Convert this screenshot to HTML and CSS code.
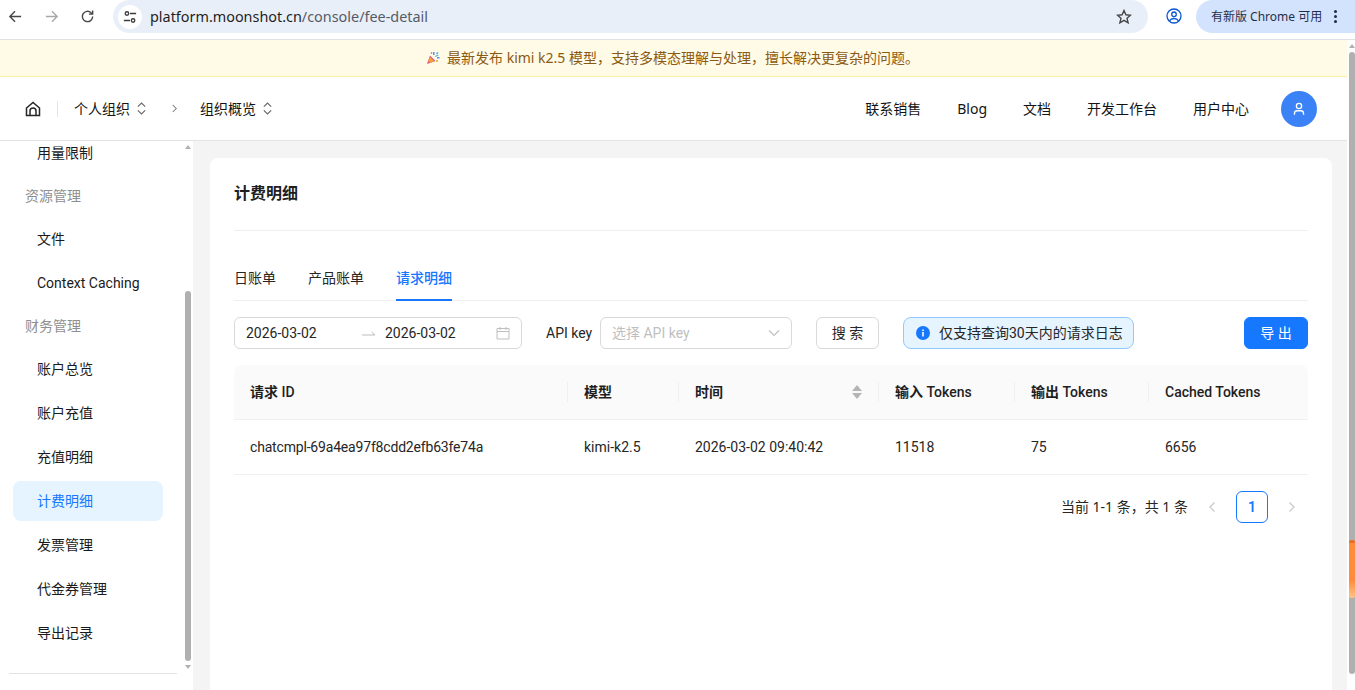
FILE: index.html
```html
<!DOCTYPE html>
<html lang="zh-CN">
<head>
<meta charset="utf-8">
<title>计费明细</title>
<link rel="stylesheet" href="styles.css">
</head>
<body>
<div class="browser-bar">
  <svg class="nav-icon back" viewBox="0 0 16 16"><path d="M14 8H2.500M7.500 2.500 2 8l5.500 5.500"/></svg>
  <svg class="nav-icon fwd" viewBox="0 0 16 16"><path d="M2 8h11.500M8.500 2.500 14 8l-5.500 5.500"/></svg>
  <svg class="nav-icon reload" viewBox="0 0 16 16"><path d="M13.500 8a5.500 5.500 0 1 1-1.700-4L13.500 5.500M13.500 1.500v4h-4"/></svg>
  <div class="omnibox">
    <span class="site-info"><svg viewBox="0 0 16 16"><circle cx="4.500" cy="4" r="2"/><circle cx="11.500" cy="12" r="2"/><path d="M8 4h7M1 12h7"/></svg></span>
    <span class="url"><b>platform.moonshot.cn</b>/console/fee-detail</span>
    <svg class="star" viewBox="0 0 16 16"><path d="m8 1.500 1.900 4.300 4.600.4-3.500 3 1.100 4.600L8 11.400l-4.100 2.400L5 9.200l-3.500-3 4.600-.4z"/></svg>
  </div>
  <svg class="profile" viewBox="0 0 16 16"><circle cx="8" cy="8" r="7"/><circle cx="8" cy="6.300" r="2.300"/><path d="M3.500 12.800c1-1.700 2.600-2.300 4.500-2.300s3.500.6 4.500 2.300"/></svg>
  <div class="update-pill"><span>有新版 Chrome 可用</span><i class="dots"></i></div>
</div>

<div class="viewport">
  <div class="page">
    <div class="banner">
      <svg class="popper" viewBox="0 0 14 14"><path fill="#e0528a" d="M1 13 4 4.500 9.500 10z"/><path fill="#f2a33a" d="m2 10 2-4 4 4-3 2z"/><path fill="#5b8def" d="M7 1h1.500v3H7zM11 6h2.500v1.500H11z"/><path fill="#42b3d5" d="m10 2 2-1 .6 1.200-2 1zM9 5l3-1.500.5 1-3 1.500z"/><circle cx="11" cy="10" r="1" fill="#f2a33a"/><circle cx="5.500" cy="2" r=".8" fill="#9b59b6"/></svg>
      <span>最新发布 kimi k2.5 模型，支持多模态理解与处理，擅长解决更复杂的问题。</span>
    </div>
    <header class="topnav">
      <svg class="home" viewBox="0 0 16 16"><path d="M1.500 7 8 1.500 14.500 7v7.500h-13z"/><path d="M5 14.500V10a3 3 0 0 1 6 0v4.500"/></svg>
      <span class="nav-sep"></span>
      <span class="crumb">个人组织</span>
      <svg class="updown" viewBox="0 0 12 14"><path d="m2 5 4-4 4 4M2 9l4 4 4-4"/></svg>
      <svg class="crumb-arrow" viewBox="0 0 8 12"><path d="m2 2 4 4-4 4"/></svg>
      <span class="crumb">组织概览</span>
      <svg class="updown" viewBox="0 0 12 14"><path d="m2 5 4-4 4 4M2 9l4 4 4-4"/></svg>
      <nav class="links">
        <a>联系销售</a><a>Blog</a><a>文档</a><a>开发工作台</a><a>用户中心</a>
      </nav>
      <span class="avatar"><svg viewBox="0 0 16 16"><circle cx="8" cy="4.500" r="3"/><path d="M2.800 14.500v-1.300c0-2 1.500-3.200 3.200-3.200h4c1.700 0 3.200 1.200 3.200 3.200v1.300"/></svg></span>
    </header>
    <div class="body-row">
      <aside class="sidebar">
        <div class="side-col">
          <ul class="menu">
            <li class="item">用量限制</li>
            <li class="group">资源管理</li>
            <li class="item">文件</li>
            <li class="item">Context Caching</li>
            <li class="group">财务管理</li>
            <li class="item">账户总览</li>
            <li class="item">账户充值</li>
            <li class="item">充值明细</li>
            <li class="item active">计费明细</li>
            <li class="item">发票管理</li>
            <li class="item">代金券管理</li>
            <li class="item">导出记录</li>
          </ul>
          <div class="side-rule"></div>
        </div>
        <div class="side-scroll">
          <i class="arrow-up"></i>
          <i class="side-thumb"></i>
          <i class="arrow-down"></i>
        </div>
      </aside>
      <main class="main">
        <section class="card">
          <h1 class="title">计费明细</h1>
          <div class="tabs">
            <a class="tab">日账单</a>
            <a class="tab">产品账单</a>
            <a class="tab on">请求明细</a>
          </div>
          <div class="filters">
            <div class="range">
              <span class="date">2026-03-02</span>
              <svg class="range-arrow" viewBox="0 0 14 8"><path d="M0 5h13L9.500 2"/></svg>
              <span class="date">2026-03-02</span>
              <svg class="calendar" viewBox="0 0 14 14"><path d="M1 2.500h12v10.500H1zM1 5.500h12M4 1v3M10 1v3"/></svg>
            </div>
            <label class="api-label">API key</label>
            <div class="select"><span>选择 API key</span><svg viewBox="0 0 12 8"><path d="m1 1.500 5 5 5-5"/></svg></div>
            <button class="btn">搜 索</button>
            <div class="notice">
              <svg viewBox="0 0 14 14"><circle cx="7" cy="7" r="7" fill="#1677ff"/><path fill="#fff" d="M6.200 6h1.600v4.500H6.200zM6.200 3.400h1.600V5H6.200z"/></svg>
              <span>仅支持查询30天内的请求日志</span>
            </div>
            <button class="btn primary">导 出</button>
          </div>
          <table class="grid">
            <colgroup>
              <col class="c1"><col class="c2"><col class="c3"><col class="c4"><col class="c5"><col class="c6">
            </colgroup>
            <thead>
              <tr>
                <th><b>请求</b> ID</th>
                <th><b>模型</b></th>
                <th><b>时间</b><span class="sorter"><i class="s-up"></i><i class="s-down"></i></span></th>
                <th><b>输入</b> Tokens</th>
                <th><b>输出</b> Tokens</th>
                <th>Cached Tokens</th>
              </tr>
            </thead>
            <tbody>
              <tr>
                <td class="req-id">chatcmpl-69a4ea97f8cdd2efb63fe74a</td>
                <td>kimi-k2.5</td>
                <td>2026-03-02 09:40:42</td>
                <td>11518</td>
                <td>75</td>
                <td>6656</td>
              </tr>
            </tbody>
          </table>
          <div class="pager">
            <span class="total">当前 1-1 条，共 1 条</span>
            <span class="pg"><svg viewBox="0 0 8 12"><path d="M6.500 1.500 2 6l4.500 4.500"/></svg></span>
            <span class="pg current">1</span>
            <span class="pg"><svg viewBox="0 0 8 12"><path d="M1.500 1.500 6 6l-4.500 4.500"/></svg></span>
          </div>
        </section>
      </main>
    </div>
  </div>
  <div class="page-scroll">
    <i class="arrow-up"></i>
    <i class="page-thumb"></i>
    <i class="orange"></i>
  </div>
</div>
</body>
</html>
```
FILE: styles.css
```css
* { box-sizing: border-box; }
html, body { margin: 0; height: 100%; overflow: hidden; }
body {
  display: flex;
  flex-direction: column;
  width: 1355px;
  height: 690px;
  background: #fff;
  color: #1f1f1f;
  font: 14px/22px Roboto, "Noto Sans CJK SC", sans-serif;
}
svg { display: block; fill: none; stroke: currentColor; }

/* browser chrome */
.browser-bar {
  flex: none;
  height: 40px;
  display: flex;
  align-items: flex-start;
  border-bottom: 1px solid #dfe1e5;
  padding-left: 8px;
}
.nav-icon { width: 15px; height: 15px; margin-top: 9px; stroke-width: 1.500; color: #474747; }
.fwd { margin-left: 21px; color: #a8a8a8; }
.reload { margin-left: 21px; }
.omnibox {
  width: 1035px;
  height: 33px;
  margin-left: 18px;
  background: #e9eff9;
  border-radius: 17px;
  display: flex;
  align-items: center;
  padding: 0 16px 0 5px;
}
.site-info {
  width: 24px; height: 24px;
  border-radius: 50%;
  background: #fff;
  display: flex; align-items: center; justify-content: center;
  color: #3c3c3c;
}
.site-info svg { width: 14px; height: 14px; stroke-width: 1.500; }
.url { margin-left: 8px; flex: 1; font-family: "Noto Sans", sans-serif; font-size: 14.4px; color: #555b66; white-space: nowrap; }
.url b { font-weight: 400; color: #1f1f1f; }
.star { width: 16px; height: 16px; color: #474747; stroke-width: 1.400; }
.profile { width: 16px; height: 16px; margin: 8px 0 0 18px; color: #0b57d0; stroke-width: 1.300; }
.update-pill {
  width: 159px; height: 33px;
  margin-left: 14px;
  background: #d3e3fd;
  border-radius: 17px 0 0 17px;
  display: flex; align-items: center;
  padding-left: 15px;
  font-family: "Noto Sans", "Noto Sans CJK SC", sans-serif;
  font-size: 12px;
  color: #1f2f4a;
  white-space: nowrap;
}
.dots {
  width: 3px; height: 3px; margin-left: 12px;
  border-radius: 50%;
  background: #1f2f4a;
  box-shadow: 0 -5px 0 #1f2f4a, 0 5px 0 #1f2f4a;
}

.viewport { flex: 1; min-height: 0; display: flex; position: relative; }
.page { flex: 1; min-width: 0; display: flex; flex-direction: column; }

/* banner */
.banner {
  flex: none;
  height: 37px;
  background: #fffbe6;
  border-bottom: 1px solid #fff1a0;
  color: #8a5a14;
  font-family: "Noto Sans", "Noto Sans CJK SC", sans-serif;
  font-size: 14px;
  display: flex; align-items: center; justify-content: center;
  padding-right: 2px;
  gap: 7px;
}
.popper { width: 14px; height: 14px; stroke: none; }

/* header */
.topnav {
  flex: none;
  height: 64px;
  display: flex;
  align-items: center;
  padding: 0 30px 0 25px;
  border-bottom: 1px solid #e3e3e3;
  background: #fff;
  color: #141414;
}
.home { width: 16px; height: 16px; stroke-width: 1.500; color: #262626; }
.nav-sep { width: 1px; height: 16px; background: #e5e5e5; margin: 0 16px; }
.crumb { white-space: nowrap; }
.updown { width: 11px; height: 13px; margin-left: 6px; color: #666; stroke-width: 1.200; }
.crumb-arrow { width: 7px; height: 11px; margin: 0 22px 0 24px; color: #777; stroke-width: 1.200; }
.links { margin-left: auto; display: flex; gap: 36px; font-family: "Noto Sans", "Noto Sans CJK SC", sans-serif; }
.avatar {
  width: 36px; height: 36px; margin-left: 32px;
  border-radius: 50%;
  background: #3b82f6;
  color: #fff;
  display: flex; align-items: center; justify-content: center;
}
.avatar svg { width: 14px; height: 14px; stroke-width: 1.500; }

/* sidebar */
.body-row { flex: 1; min-height: 0; display: flex; }
.sidebar { flex: none; width: 193px; display: flex; background: #fff; }
.side-col { width: 185px; flex: none; overflow: hidden; }
.menu { list-style: none; margin: -8px 0 0; padding: 0 8px 0 13px; height: 540px; }
.item {
  height: 40px;
  margin-bottom: 4px;
  padding-left: 24px;
  line-height: 40px;
  border-radius: 8px;
  width: 150px;
  color: #1a1a1a;
  white-space: nowrap;
}
.item.active { background: #e6f4ff; color: #1677ff; }
.group {
  height: 38px;
  margin-bottom: 4px;
  padding-left: 12px;
  line-height: 38px;
  color: #8f8f8f;
}
.side-rule { height: 1px; margin: 0 8px 0 9px; background: #e3e3e3; }
.side-scroll {
  width: 6px; flex: none;
  display: flex; flex-direction: column; align-items: center;
  padding-top: 4px;
}
.arrow-up { width: 0; height: 0; border: 3px solid transparent; border-top: 0; border-bottom: 4px solid #b0b0b0; }
.arrow-down { width: 0; height: 0; border: 3px solid transparent; border-bottom: 0; border-top: 4px solid #b0b0b0; margin-top: 4px; }
.side-thumb { width: 6px; height: 370px; margin-top: 142px; background: #b0b0b0; border-radius: 3px; }

/* main */
.main { flex: 1; min-width: 0; background: #f4f4f4; padding: 17px 15px 0 17px; overflow: hidden; }
.card { background: #fff; border-radius: 8px; padding: 24px 24px 200px; }
.title {
  margin: 0;
  padding-bottom: 24px;
  border-bottom: 1px solid #efefef;
  font-size: 16px;
  line-height: 24px;
  font-weight: 700;
  color: #1f1f1f;
}
.tabs { display: flex; gap: 32px; padding-top: 36px; border-bottom: 1px solid #efefef; }
.tab { padding-bottom: 10px; border-bottom: 2px solid transparent; margin-bottom: -1px; color: #262626; }
.tab.on { color: #1677ff; border-color: #1677ff; font-weight: 500; }

.filters { display: flex; align-items: center; height: 32px; margin-top: 16px; }
.range {
  width: 288px; height: 32px;
  border: 1px solid #d9d9d9; border-radius: 6px;
  display: flex; align-items: center;
  padding: 0 11px;
  color: #262626;
}
.date { width: 72px; white-space: nowrap; }
.range-arrow { width: 14px; height: 8px; margin: 2px 9px 0 44px; color: #bdbdbd; }
.calendar { width: 14px; height: 14px; margin-left: auto; color: #bfbfbf; }
.api-label { width: 46px; margin-left: 24px; color: #262626; white-space: nowrap; }
.select {
  width: 192px; height: 32px; margin-left: 8px;
  border: 1px solid #d9d9d9; border-radius: 6px;
  display: flex; align-items: center; justify-content: space-between;
  padding: 0 11px;
  color: #bfbfbf;
}
.select svg { width: 12px; height: 8px; stroke-width: 1.100; }
.btn {
  width: 63px; height: 32px; margin-left: 24px;
  border: 1px solid #d9d9d9; border-radius: 6px;
  background: #fff;
  color: #262626;
  font: inherit;
  padding: 0;
}
.btn.primary { width: 64px; margin-left: auto; background: #1677ff; border-color: #1677ff; color: #fff; }
.notice {
  width: 231px; height: 32px; margin-left: 24px;
  border: 1px solid #91caff; border-radius: 8px;
  background: #e6f4ff;
  display: flex; align-items: center; gap: 9px;
  padding-left: 12px;
  color: #262626;
  white-space: nowrap;
}
.notice svg { width: 14px; height: 14px; stroke: none; flex: none; }

.grid { width: 1074px; margin-top: 16px; border-collapse: separate; border-spacing: 0; table-layout: fixed; }
.c1 { width: 334px; } .c2 { width: 111px; } .c3 { width: 200px; }
.c4 { width: 136px; } .c5 { width: 134px; } .c6 { width: 159px; }
th {
  position: relative;
  height: 55px;
  padding: 0 16px;
  background: #fafafa;
  border-bottom: 1px solid #f0f0f0;
  text-align: left;
  font-weight: 500;
  color: #1f1f1f;
}
th b { font-weight: 700; }
th:first-child { border-top-left-radius: 8px; }
th:last-child { border-top-right-radius: 8px; }
th:not(:last-child)::after {
  content: "";
  position: absolute;
  right: 0; top: 17px; bottom: 17px;
  width: 1px;
  background: #f0f0f0;
}
td {
  height: 55px;
  padding: 0 16px;
  border-bottom: 1px solid #f0f0f0;
  color: #262626;
  white-space: nowrap;
}
.req-id { letter-spacing: -.18px; }
.sorter { position: absolute; right: 17px; top: 20px; display: flex; flex-direction: column; gap: 2px; }
.s-up, .s-down { width: 0; height: 0; border: 5px solid transparent; }
.s-up { border-top: 0; border-bottom: 6px solid #b5b5b5; }
.s-down { border-bottom: 0; border-top: 6px solid #b5b5b5; }

.pager { display: flex; justify-content: flex-end; align-items: center; gap: 8px; margin-top: 16px; }
.total { white-space: nowrap; color: #262626; font-family: "Noto Sans", "Noto Sans CJK SC", sans-serif; }
.pg {
  width: 32px; height: 32px;
  display: flex; align-items: center; justify-content: center;
  color: #c8c8c8;
  border-radius: 6px;
}
.pg svg { width: 8px; height: 12px; stroke-width: 1.200; }
.pg.current { border: 1px solid #1677ff; color: #1677ff; font-weight: 600; }

/* page scrollbar */
.page-scroll {
  width: 8px; flex: none;
  background: #fff;
  display: flex; flex-direction: column; align-items: flex-end;
  padding-top: 4px;
  position: relative;
}
.page-thumb { width: 6px; height: 622px; margin-top: 4px; background: #b0b0b0; border-radius: 3px; }
.orange {
  position: absolute;
  right: 0; top: 500px;
  width: 6px; height: 58px;
  border-radius: 2px;
  background: linear-gradient(#e8702a 0 3px, #ff8c3c 3px 70%, #ffc48c);
}
```
